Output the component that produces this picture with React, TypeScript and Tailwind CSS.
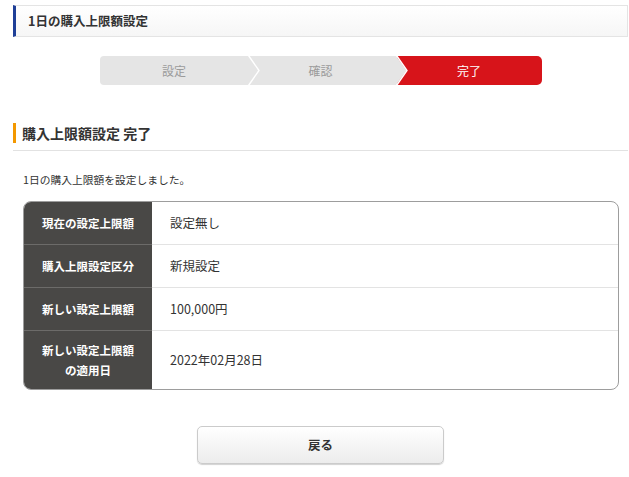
const FONT = '"Noto Sans CJK JP", "Noto Sans", sans-serif';

const STEPS = [
  { label: '設定', active: false },
  { label: '確認', active: false },
  { label: '完了', active: true },
];

const ROWS = [
  { label: ['現在の設定上限額'], value: '設定無し', h: 'h-[42px]' },
  { label: ['購入上限設定区分'], value: '新規設定', h: 'h-[43px]' },
  { label: ['新しい設定上限額'], value: '100,000円', h: 'h-[43px]' },
  { label: ['新しい設定上限額', 'の適用日'], value: '2022年02月28日', h: 'h-[59px]' },
];

// chevron drawn over the boundary between two steps
const Chevron = ({ fill }: { fill: string }) => (
  <svg
    className="absolute left-full top-0 z-10 -ml-px overflow-visible"
    width="12"
    height="29"
    viewBox="0 0 12 29"
  >
    <polygon points="0,0 10.5,14.5 0,29" fill={fill} />
    <polyline points="0.5,-0.5 11,14.5 0.5,29.5" fill="none" stroke="#ffffff" strokeWidth="1.4" />
  </svg>
);

export default function App() {
  return (
    <div className="min-h-screen bg-white text-[#333]" style={{ fontFamily: FONT }}>
      <div className="ml-[13px] mr-px pt-[5px] pb-[13px]">
        {/* Page title */}
        <div className="flex h-[32px] items-center border border-[#e4e4e4] border-l-[3px] border-l-[#1f3f97] bg-gradient-to-b from-white to-[#f6f6f6] pl-[12px]">
          <h1 className="text-[12.5px] font-bold leading-none text-[#333]">1日の購入上限額設定</h1>
        </div>

        {/* Steps */}
        <div className="mx-auto mt-[19px] flex h-[29px] w-[442px]">
          {STEPS.map((s, i) => (
            <div
              key={s.label}
              className={`relative flex h-full items-center justify-center text-[12px] ${
                s.active ? 'w-[145px] rounded-r-[5px] bg-[#d7141a] text-white' : 'bg-[#e5e5e5] text-[#9b9b9b]'
              } ${i === 0 ? 'w-[149px] rounded-l-[4px]' : ''} ${i === 1 ? 'w-[148px] pr-[4px]' : ''}`}
            >
              {s.label}
              {i < 2 && <Chevron fill="#e5e5e5" />}
            </div>
          ))}
        </div>

        {/* Section heading */}
        <h2 className="mt-[38px] border-l-[3px] border-[#f39800] pl-[6px] text-[14px] font-bold leading-[20px] text-[#333]">
          購入上限額設定 完了
        </h2>
        <div className="mt-[7px] h-px bg-[#e2e2e2]" />

        <p className="ml-[10px] mt-[21px] text-[10.75px] leading-[16px] text-[#333]">
          1日の購入上限額を設定しました。
        </p>

        {/* Result table */}
        <div className="ml-[10px] mr-[9px] mt-[13px] overflow-hidden rounded-[8px] border border-[#9d9d9d]">
          {ROWS.map((r, i) => (
            <div key={i} className={`grid grid-cols-[128px_1fr] ${r.h}`}>
              <div
                className={`flex flex-col items-center justify-center bg-[#494846] text-[11.5px] font-bold leading-[20px] text-white ${
                  i > 0 ? 'border-t border-[#6c6b69]' : ''
                }`}
              >
                {r.label.map((l) => (
                  <span key={l}>{l}</span>
                ))}
              </div>
              <div
                className={`flex items-center pl-[18px] text-[12.5px] text-[#333] ${
                  i > 0 ? 'border-t border-[#e3e3e3]' : ''
                }`}
              >
                {r.value}
              </div>
            </div>
          ))}
        </div>

        {/* Back button */}
        <button
          type="button"
          className="mx-auto mt-[36px] flex h-[38px] w-[247px] items-center justify-center rounded-[5px] border border-[#cbcbcb] bg-gradient-to-b from-white to-[#ececec] text-[12.5px] font-bold text-[#333] shadow-[0_1px_1px_rgba(0,0,0,0.18)]"
        >
          戻る
        </button>
      </div>
    </div>
  );
}
